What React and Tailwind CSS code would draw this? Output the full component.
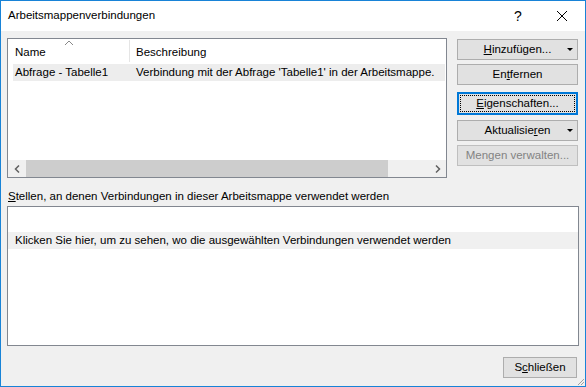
import React from "react";

function Btn({ children, arrow, focused, disabled, className = "" }) {
  return (
    <div
      className={
        "relative flex items-center justify-center h-[21px] text-[11.5px] " +
        (focused
          ? "border-2 border-[#0078d7] bg-[#e1e1e1] "
          : disabled
          ? "border border-[#bfbfbf] bg-[#e1e1e1] text-[#838383] "
          : "border border-[#adadad] bg-[#e1e1e1] ") +
        className
      }
    >
      {focused && (
        <div className="absolute inset-[1px] border border-dotted border-black" />
      )}
      <span className="relative">{children}</span>
      {arrow && (
        <span className="absolute right-[4px] top-[8px] w-0 h-0 border-l-[3px] border-r-[3px] border-t-[3px] border-l-transparent border-r-transparent border-t-black" />
      )}
    </div>
  );
}

export default function App() {
  return (
    <div
      className="w-[586px] h-[387px] border border-[#1883d7] bg-[#f0f0f0] flex flex-col text-black"
      style={{ fontFamily: '"Liberation Sans", Arial, sans-serif' }}
    >
      {/* title bar */}
      <div className="h-[30px] bg-white flex items-center pl-[7px] text-[11.5px] shrink-0">
        <span className="flex-1">Arbeitsmappenverbindungen</span>
        <span className="w-[32px] text-center text-[14px] mr-[5px]">?</span>
        <svg width="46" height="30" viewBox="0 0 46 30">
          <path d="M18 10 L28 20 M28 10 L18 20" stroke="#000" strokeWidth="1" fill="none" />
        </svg>
      </div>

      <div className="flex-1 flex flex-col px-[6px] pt-[7px]">
        <div className="flex gap-[10px]">
          {/* list view */}
          <div className="w-[440px] h-[140px] border border-[#828790] bg-white flex flex-col text-[11.5px] whitespace-nowrap">
            <div className="relative h-[24px] flex items-end pb-[2px]">
              <svg width="10" height="6" viewBox="0 0 10 6" className="absolute left-[56px] top-[1px]">
                <path d="M1 5 L5 1 L9 5" stroke="#888" strokeWidth="1" fill="none" />
              </svg>
              <div className="w-[121px] shrink-0 pl-[7px]">Name</div>
              <div className="w-px h-[22px] bg-[#e5e5e5] self-start mt-[1px] shrink-0" />
              <div className="pl-[6px]">Beschreibung</div>
            </div>
            <div className="flex-1 pl-[5px] pr-[1px] pt-[1px]">
              <div className="h-[17px] bg-[#ededed] flex items-center">
                <div className="w-[122px] shrink-0 pl-[2px]">Abfrage - Tabelle1</div>
                <div className="pl-[1px]">
                  Verbindung mit der Abfrage 'Tabelle1' in der Arbeitsmappe.
                </div>
              </div>
            </div>
            <div className="h-[17px] bg-[#f0f0f0] flex items-center">
              <div className="w-[17px] flex justify-center">
                <svg width="6" height="8" viewBox="0 0 6 8">
                  <path d="M5 0.5 L1.5 4 L5 7.5" stroke="#606060" strokeWidth="1.5" fill="none" />
                </svg>
              </div>
              <div className="ml-[1px] w-[362px] h-[17px] bg-[#cdcdcd]" />
              <div className="flex-1" />
              <div className="w-[17px] flex justify-center">
                <svg width="6" height="8" viewBox="0 0 6 8">
                  <path d="M1 0.5 L4.5 4 L1 7.5" stroke="#606060" strokeWidth="1.5" fill="none" />
                </svg>
              </div>
            </div>
          </div>

          {/* buttons */}
          <div className="w-[121px] flex flex-col pt-[1px]">
            <Btn arrow>
              <span className="underline">H</span>inzufügen...
            </Btn>
            <Btn className="mt-[4px]">
              En<span className="underline">t</span>fernen
            </Btn>
            <Btn focused className="mt-[7px] h-[23px]">
              <span className="underline">E</span>igenschaften...
            </Btn>
            <Btn arrow className="mt-[5px]">
              Aktualisie<span className="underline">r</span>en
            </Btn>
            <Btn disabled className="mt-[4px]">
              Mengen verwalten...
            </Btn>
          </div>
        </div>

        <div className="text-[11.5px] mt-[10px] leading-[16px] pl-[1px]">
          <span className="underline">S</span>tellen, an denen Verbindungen in dieser Arbeitsmappe verwendet werden
        </div>
        <div className="mt-[2px] w-[572px] h-[140px] border border-[#828790] bg-white text-[11.5px] pt-[25px]">
          <div className="h-[17px] bg-[#f0f0f0] flex items-center pl-[7px]">
            Klicken Sie hier, um zu sehen, wo die ausgewählten Verbindungen verwendet werden
          </div>
        </div>

        <div className="flex justify-end mt-[11px] pr-[2px]">
          <Btn className="w-[74px]">
            S<span className="underline">c</span>hließen
          </Btn>
        </div>
        <div className="flex-1 relative">
          <svg width="10" height="10" viewBox="0 0 10 10" className="absolute right-[-6px] bottom-0">
            <path d="M9 3 L3 9 M9 6 L6 9" stroke="#a0a0a0" strokeWidth="1" fill="none" />
          </svg>
        </div>
      </div>
    </div>
  );
}
